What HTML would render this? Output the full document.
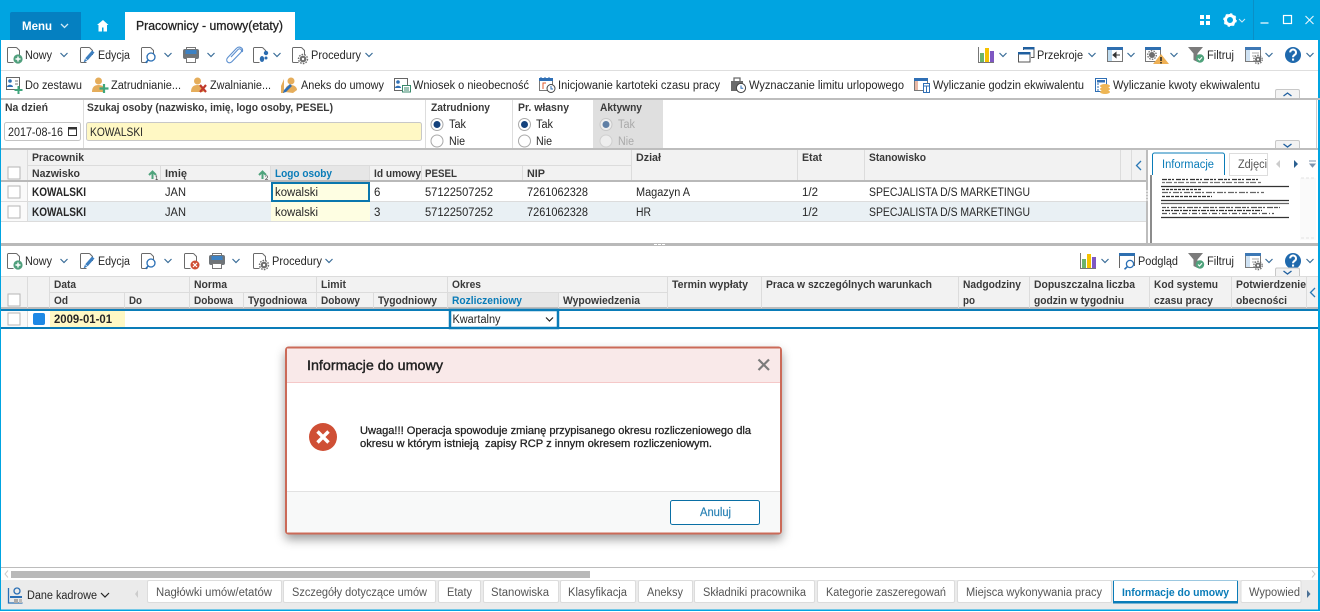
<!DOCTYPE html>
<html lang="pl"><head><meta charset="utf-8"><title>Pracownicy - umowy(etaty)</title>
<style>
html,body{margin:0;padding:0;background:#fff;width:1320px;height:612px;overflow:hidden}
svg{display:block}
text{font-family:"Liberation Sans",sans-serif;font-size:11.5px;fill:#262626}
.b{font-weight:bold}
.h{font-weight:bold;fill:#3a3a3a;font-size:11px}
.bl{fill:#0a7cb8}
.w{fill:#fff}
.g{fill:#aaa}
.t{fill:#555;font-size:11.5px}
.d{font-size:11.2px;fill:#222;stroke:#222;stroke-width:.28px}
</style></head><body>
<svg xmlns="http://www.w3.org/2000/svg" width="1320" height="612" viewBox="0 0 1320 612">
<defs>
<filter id="sh" x="-10%" y="-15%" width="120%" height="135%"><feDropShadow dx="0" dy="5" stdDeviation="5" flood-color="#000" flood-opacity=".38"/></filter>
<path id="ch" d="M-3.500-2 0 1.500 3.500-2" fill="none" stroke="#3a6d99" stroke-width="1.200"/>
<path id="doc" d="M9.500 .5H1.500a1 1 0 0 0-1 1v13a1 1 0 0 0 1 1h5M9.500 .5l3 3V8" fill="none" stroke="#6a6a6a" stroke-width="1"/>
<g id="nowy"><use href="#doc"/><circle cx="11" cy="12" r="4.600" fill="#4f9f7c"/><path d="M11 9.500v5M8.500 12h5" stroke="#fff" stroke-width="1.400"/></g>
<g id="edit"><use href="#doc"/><path d="M3.500 15.500l1.500-4 7-8 2.500 2-7 8z" fill="#3d7fc0"/><path d="M5 11.500l2.500 2" stroke="#fff" stroke-width=".7"/></g>
<g id="find"><use href="#doc"/><circle cx="10" cy="10" r="4" fill="#fff" stroke="#2a6fb5" stroke-width="1.300"/><path d="M7.200 13l-2.500 2.800" stroke="#2a6fb5" stroke-width="1.600"/></g>
<g id="print"><path d="M3.500 .5h9v3h-9z" fill="#fff" stroke="#777"/><rect x="0" y="2" width="16" height="10" rx="2" fill="#6f7478"/><rect x="2.500" y="3" width="11" height="4" fill="#3d82c4"/><path d="M3.500 10.500h9v5h-9z" fill="#fff" stroke="#777"/></g>
<g id="proc"><use href="#doc"/><circle cx="11" cy="12" r="3.300" fill="#6e6e6e"/><circle cx="11" cy="12" r="4.500" fill="none" stroke="#6e6e6e" stroke-width="1.400" stroke-dasharray="1.600 1.200"/><circle cx="11" cy="12" r="1.200" fill="#fff"/></g>
<g id="chart"><path d="M.5 0v15.500H16" fill="none" stroke="#777"/><rect x="2" y="6" width="4" height="9" fill="#6bb36b"/><rect x="7" y="1" width="4" height="14" fill="#f5c200"/><rect x="12" y="4" width="4" height="11" fill="#7e57c2"/></g>
<g id="funnel"><path d="M0 0h15l-5.500 6.500V15l-4-2V6.500z" fill="#7b7b7b"/><circle cx="12" cy="11.500" r="4.200" fill="#4fa37c"/><path d="M10 11.500l1.500 1.500 2.500-2.800" fill="none" stroke="#fff" stroke-width="1.100"/></g>
<g id="tgear"><rect x=".5" y=".5" width="15" height="14" fill="#fff" stroke="#7a7a7a"/><rect x="0" y="0" width="16" height="3" fill="#3d78b5"/><rect x="1" y="3" width="4" height="11" fill="#cfe2f3"/><path d="M7 6h7M7 9h3" stroke="#aaa"/><circle cx="13" cy="12.500" r="3" fill="#6e6e6e"/><circle cx="13" cy="12.500" r="4.200" fill="none" stroke="#6e6e6e" stroke-width="1.300" stroke-dasharray="1.500 1.200"/><circle cx="13" cy="12.500" r="1.100" fill="#fff"/></g>
<g id="help"><circle r="8" fill="#1f69ad"/><path d="M-2.800-2.600a2.900 2.900 0 1 1 4.500 2.400c-1.100.8-1.700 1.200-1.700 2.500" fill="none" stroke="#fff" stroke-width="2"/><rect x="-1" y="3.500" width="2.100" height="2.100" fill="#fff"/></g>
<g id="person"><circle cx="6.500" cy="4" r="3.500" fill="#e5ad5b"/><path d="M0 15c0-5 2.500-7 6.500-7s6 2 6 5v2z" fill="#e5ad5b"/></g>
<g id="radio"><circle r="6" fill="#fff" stroke="#a9a9a9"/></g>
<g id="radioOn"><circle r="6" fill="#fff" stroke="#a9a9a9"/><circle r="3.500" fill="#14427c"/></g>
<rect id="cb" width="12" height="12" fill="#fff" stroke="#b5b5b5"/>
<g id="sort"><path d="M3.500 9V2M0 5l3.500-3.500L7 5" fill="none" stroke="#4fa37c" stroke-width="2"/></g>
</defs>

<rect width="1320" height="612" fill="#fff"/>
<!-- top bar -->
<rect width="1320" height="40" fill="#00a4e1"/>
<rect x="0" y="40" width="1" height="570" fill="#00a4e1"/><rect x="1318" y="40" width="2" height="570" fill="#00a4e1"/>
<path d="M10 14a2 2 0 0 1 2-2h69v28H10z" fill="#0580c1"/>
<text class="b w" x="22" y="30" textLength="30" lengthAdjust="spacingAndGlyphs">Menu</text>
<path d="M61 24l3.500 3.500L68 24" fill="none" stroke="#cfeaf7" stroke-width="1.300"/>
<path d="M103 20l5.500 5h-1.500v6.500h-3.500v-4h-1.500v4H98.500V25H97z" fill="#fff"/>
<rect x="125" y="12" width="170" height="28" fill="#fff"/>
<text class="d" x="136" y="30" textLength="147" lengthAdjust="spacingAndGlyphs" style="font-size:12.500px">Pracownicy - umowy(etaty)</text>
<g fill="#fff"><rect x="1200" y="15" width="4" height="4"/><rect x="1206" y="15" width="4" height="4"/><rect x="1200" y="21" width="4" height="4"/><rect x="1206" y="21" width="4" height="4"/></g>
<circle cx="1230" cy="20" r="4.500" fill="none" stroke="#fff" stroke-width="3"/><circle cx="1230" cy="20" r="6" fill="none" stroke="#fff" stroke-width="1.600" stroke-dasharray="2.200 2.500"/>
<path d="M1239 19l3 3 3-3" fill="none" stroke="#cfeaf7"/>
<rect x="1253" y="0" width="1" height="40" fill="#0a8fc6"/>
<path d="M1260.500 23h8" stroke="#fff" stroke-width="1.200"/>
<rect x="1283.500" y="15.500" width="8" height="8" fill="none" stroke="#fff" stroke-width="1.200"/>
<path d="M1305.500 16l8 8M1313.500 16l-8 8" stroke="#eaf7fd" stroke-width="1.100"/>

<!-- toolbar 1 -->
<use href="#nowy" x="7" y="47"/><text x="25" y="59" textLength="27" lengthAdjust="spacingAndGlyphs">Nowy</text><use href="#ch" x="64" y="55"/>
<use href="#edit" x="80" y="47"/><text x="98" y="59" textLength="32" lengthAdjust="spacingAndGlyphs">Edycja</text>
<use href="#find" x="141" y="47"/><use href="#ch" x="168" y="55"/>
<use href="#print" x="183" y="47"/><use href="#ch" x="211" y="55"/>
<path d="M231 57l7-7.500c2-2 4.800.8 2.800 3l-9 9.300c-3 3-7-1-4-4.300l8.500-9c3-3 7.500-.5 6 3.500" fill="none" stroke="#5c8fcf" stroke-width="1.100"/>
<use href="#doc" x="253" y="47"/><g fill="#2b6cb0"><circle cx="266" cy="53" r="2.200"/><ellipse cx="262" cy="59" rx="2.200" ry="3"/><circle cx="266" cy="58" r="1.500"/></g><use href="#ch" x="277" y="55"/>
<use href="#proc" x="292" y="47"/><text x="311" y="59" textLength="50" lengthAdjust="spacingAndGlyphs">Procedury</text><use href="#ch" x="369" y="55"/>

<use href="#chart" x="978" y="47"/><use href="#ch" x="1003" y="55"/>
<path d="M1023.500 50V47.500h10.500v10h-3" fill="none" stroke="#555"/><rect x="1023" y="47" width="11.500" height="2.500" fill="#1f5f9f"/><rect x="1018.500" y="52.500" width="11.500" height="9.500" fill="#fff" stroke="#555"/><rect x="1018" y="52" width="12.500" height="2.500" fill="#1f5f9f"/>
<text x="1037" y="59" textLength="46" lengthAdjust="spacingAndGlyphs">Przekroje</text><use href="#ch" x="1092" y="55"/>
<rect x="1107.500" y="47.500" width="15" height="14" fill="#fff" stroke="#777"/><rect x="1107" y="47" width="16" height="3" fill="#2e6fb0"/><rect x="1108" y="50" width="4" height="11" fill="#bfdcf0"/><path d="M1114 55h6M1116 52.500l-3 2.500 3 2.500z" stroke="#333" fill="#333"/>
<use href="#ch" x="1131" y="55"/>
<rect x="1145.500" y="47.500" width="15" height="14" fill="#fff" stroke="#777"/><rect x="1145" y="47" width="16" height="3" fill="#2e6fb0"/><circle cx="1152" cy="55" r="3" fill="#6e6e6e"/><circle cx="1152" cy="55" r="4.300" fill="none" stroke="#6e6e6e" stroke-width="1.300" stroke-dasharray="1.500 1.200"/><path d="M1161 54l-8 10h16z" fill="#eeb055"/><path d="M1161 57v4M1161 62v1.500" stroke="#222" stroke-width="1.500"/>
<use href="#ch" x="1174" y="55"/>
<use href="#funnel" x="1188" y="47"/><text x="1207" y="59" textLength="27" lengthAdjust="spacingAndGlyphs">Filtruj</text>
<use href="#tgear" x="1245" y="47"/><use href="#ch" x="1269" y="55"/>
<use href="#help" x="1293" y="55"/><use href="#ch" x="1310" y="55"/>
<rect x="1" y="70" width="1317" height="1" fill="#dedede"/>

<!-- toolbar 2 -->
<g><rect x="6.500" y="77.500" width="13" height="12" fill="#fff" stroke="#666"/><circle cx="10" cy="81" r="1.800" fill="#2f6fb5"/><path d="M7 87c0-3 6-3 6 0z" fill="#2f6fb5"/><path d="M15 81h3M15 84h3" stroke="#777"/><path d="M18.500 86v8M14.500 90h8" stroke="#3fa67c" stroke-width="2"/></g>
<text x="25" y="89" textLength="57" lengthAdjust="spacingAndGlyphs">Do zestawu</text>
<use href="#person" x="92" y="77"/><path d="M104 84v9M99.500 88.500h9" stroke="#3fa67c" stroke-width="2.200"/>
<text x="111" y="89" textLength="70" lengthAdjust="spacingAndGlyphs">Zatrudnianie...</text>
<use href="#person" x="191" y="77"/><path d="M200 85l6 7M206 85l-6 7" stroke="#c0392b" stroke-width="2.200"/>
<text x="210" y="89" textLength="61" lengthAdjust="spacingAndGlyphs">Zwalnianie...</text>
<path d="M281 86l3-7v14h-3z" fill="#e5ad5b"/><circle cx="291" cy="81" r="3.500" fill="#e5ad5b"/><path d="M285 92c0-6 3-7 6-7s6 2 6 5l-4 3z" fill="#e5ad5b"/><path d="M283 93l1-3 6-6 2 2-6 6z" fill="#2f6fb5"/>
<text x="301" y="89" textLength="83" lengthAdjust="spacingAndGlyphs">Aneks do umowy</text>
<rect x="394.500" y="78.500" width="13" height="12" fill="#fff" stroke="#666"/><circle cx="398" cy="82" r="1.800" fill="#2f6fb5"/><path d="M395 88c0-3 6-3 6 0z" fill="#2f6fb5"/><rect x="402.500" y="85.500" width="8" height="6.500" fill="#fff" stroke="#3b8a6c"/><path d="M404 88h5M404 90h5" stroke="#3b8a6c"/>
<text x="413" y="89" textLength="116" lengthAdjust="spacingAndGlyphs">Wniosek o nieobecność</text>
<rect x="539.500" y="79.500" width="13" height="11" fill="#fff" stroke="#777"/><rect x="539" y="78" width="14" height="3" fill="#2f6fb5"/><path d="M541 77v3M545 77v3M549 77v3" stroke="#2f6fb5"/><path d="M546 83h-3v6" fill="none" stroke="#e05a2b"/><circle cx="551" cy="88.500" r="4" fill="#fff" stroke="#444"/><path d="M551 86v3h2" fill="none" stroke="#2f6fb5"/>
<text x="558" y="89" textLength="162" lengthAdjust="spacingAndGlyphs">Inicjowanie kartoteki czasu pracy</text>
<path d="M731 81h12v10h-12z" fill="#6a6a6a"/><path d="M734 81v-3h6v3" fill="none" stroke="#6a6a6a" stroke-width="1.300"/><circle cx="741" cy="88" r="4.600" fill="#fff" stroke="#444"/><path d="M741 85.500v2.800h2.200" fill="none" stroke="#2f6fb5"/>
<text x="749" y="89" textLength="155" lengthAdjust="spacingAndGlyphs">Wyznaczanie limitu urlopowego</text>
<rect x="914.500" y="78.500" width="13" height="12" fill="#fff" stroke="#777"/><rect x="914" y="78" width="14" height="3" fill="#2f6fb5"/><rect x="915" y="81" width="3" height="9" fill="#e9b8a6"/><rect x="923.500" y="83.500" width="6" height="9" fill="#fff" stroke="#2f6fb5"/><path d="M924 86h5M926.500 86v6" stroke="#2f6fb5"/>
<text x="933" y="89" textLength="151" lengthAdjust="spacingAndGlyphs">Wyliczanie godzin ekwiwalentu</text>
<rect x="1095.500" y="78.500" width="11" height="13" fill="#fff" stroke="#2f6fb5"/><rect x="1097" y="80" width="8" height="2.500" fill="#2f6fb5"/><path d="M1097 84h2M1097 87h2M1097 90h2" stroke="#2f6fb5"/><ellipse cx="1105" cy="86" rx="5" ry="2" fill="#eeb655"/><ellipse cx="1105" cy="89" rx="5" ry="2" fill="#eeb655"/><ellipse cx="1105" cy="92" rx="5" ry="2" fill="#eeb655"/>
<text x="1113" y="89" textLength="147" lengthAdjust="spacingAndGlyphs">Wyliczanie kwoty ekwiwalentu</text>
<path d="M1275.500 98v-7a1.500 1.500 0 0 1 1.500-1.500h21a1.500 1.500 0 0 1 1.500 1.500v7" fill="#f3f3f3" stroke="#c8c8c8"/>
<path d="M1283.500 96l4-3 4 3" fill="none" stroke="#1f5f9f" stroke-width="1.300"/>

<!-- filter panel -->
<rect x="0" y="98" width="1320" height="2" fill="#bdbdbd"/><rect x="0" y="98" width="1" height="52" fill="#00a4e1"/>
<rect x="1" y="148" width="1317" height="2" fill="#bdbdbd"/>
<rect x="1316" y="100" width="1" height="48" fill="#ccc"/>
<rect x="83" y="100" width="1" height="48" fill="#ddd"/><rect x="425" y="100" width="1" height="48" fill="#ddd"/><rect x="512" y="100" width="1" height="48" fill="#ddd"/>
<rect x="593" y="100" width="70" height="48" fill="#dfdfdf"/>
<text class="h" x="5" y="111" textLength="43" lengthAdjust="spacingAndGlyphs">Na dzień</text>
<text class="h" x="87" y="111" textLength="246" lengthAdjust="spacingAndGlyphs">Szukaj osoby (nazwisko, imię, logo osoby, PESEL)</text>
<text class="h" x="431" y="111" textLength="59" lengthAdjust="spacingAndGlyphs">Zatrudniony</text>
<text class="h" x="518" y="111" textLength="51" lengthAdjust="spacingAndGlyphs">Pr. własny</text>
<text class="h" x="600" y="111" textLength="42" lengthAdjust="spacingAndGlyphs">Aktywny</text>
<rect x="4.500" y="122.500" width="76" height="18" rx="2" fill="#fff" stroke="#c4c4c4"/>
<text x="8" y="136" textLength="55" lengthAdjust="spacingAndGlyphs">2017-08-16</text>
<rect x="68.500" y="128.500" width="8" height="7" fill="none" stroke="#333"/><rect x="68" y="127" width="9" height="2.500" fill="#333"/>
<rect x="86.500" y="122.500" width="335" height="18" rx="2" fill="#fff8c4" stroke="#c8c8c8"/>
<text x="90" y="136" textLength="53" lengthAdjust="spacingAndGlyphs">KOWALSKI</text>
<use href="#radioOn" x="437" y="124.500"/><use href="#radio" x="437" y="141"/>
<text x="449" y="128" textLength="17" lengthAdjust="spacingAndGlyphs">Tak</text><text x="449" y="145" textLength="16" lengthAdjust="spacingAndGlyphs">Nie</text>
<use href="#radioOn" x="524.500" y="124.500"/><use href="#radio" x="524.500" y="141"/>
<text x="536" y="128" textLength="17" lengthAdjust="spacingAndGlyphs">Tak</text><text x="536" y="145" textLength="16" lengthAdjust="spacingAndGlyphs">Nie</text>
<circle cx="606" cy="124.500" r="6" fill="#eee" stroke="#c8c8c8"/><circle cx="606" cy="124.500" r="3.500" fill="#5f7fa5"/><circle cx="606" cy="141" r="6" fill="#eee" stroke="#d0d0d0"/>
<text class="g" x="618" y="128" textLength="17" lengthAdjust="spacingAndGlyphs">Tak</text><text class="g" x="618" y="145" textLength="16" lengthAdjust="spacingAndGlyphs">Nie</text>
<path d="M1275.500 148v-6a1.500 1.500 0 0 1 1.500-1.500h21a1.500 1.500 0 0 1 1.500 1.500v6" fill="#f3f3f3" stroke="#c8c8c8"/>
<path d="M1283.500 144l4 3 4-3" fill="none" stroke="#1f5f9f" stroke-width="1.300"/>

<!-- grid 1 -->
<rect x="1" y="150" width="1145" height="30" fill="#f2f2f2"/>
<rect x="271" y="165" width="98" height="15" fill="#e6e6e6"/>
<rect x="1" y="180" width="1145" height="2" fill="#b9b9b9"/>
<g fill="#dcdcdc">
<rect x="27" y="150" width="1" height="30"/><rect x="28" y="165" width="603" height="1"/>
<rect x="160" y="165" width="1" height="15"/><rect x="270" y="165" width="1" height="15"/><rect x="369" y="165" width="1" height="15"/><rect x="421" y="165" width="1" height="15"/><rect x="522" y="165" width="1" height="15"/>
<rect x="631" y="150" width="1" height="30"/><rect x="797" y="150" width="1" height="30"/><rect x="864" y="150" width="1" height="30"/><rect x="1120" y="150" width="1" height="30"/><rect x="1131" y="150" width="1" height="30"/>
<rect x="1" y="201" width="1145" height="1"/><rect x="1" y="221" width="1145" height="1"/><rect x="27" y="182" width="1" height="40"/>
</g>
<text class="h" x="32" y="161" textLength="52" lengthAdjust="spacingAndGlyphs">Pracownik</text>
<text class="h" x="32" y="177" textLength="48" lengthAdjust="spacingAndGlyphs">Nazwisko</text>
<use href="#sort" x="149" y="170"/><text x="155" y="180" style="font-size:6px">1</text>
<text class="h" x="165" y="177" textLength="22" lengthAdjust="spacingAndGlyphs">Imię</text>
<use href="#sort" x="259" y="170"/><text x="265" y="180" style="font-size:6px">2</text>
<text class="h bl" x="275" y="177" textLength="57" lengthAdjust="spacingAndGlyphs">Logo osoby</text>
<text class="h" x="374" y="177" textLength="47" lengthAdjust="spacingAndGlyphs">Id umowy</text>
<text class="h" x="425" y="177" textLength="32" lengthAdjust="spacingAndGlyphs">PESEL</text>
<text class="h" x="527" y="177" textLength="18" lengthAdjust="spacingAndGlyphs">NIP</text>
<text class="h" x="636" y="161" textLength="25" lengthAdjust="spacingAndGlyphs">Dział</text>
<text class="h" x="802" y="161" textLength="20" lengthAdjust="spacingAndGlyphs">Etat</text>
<text class="h" x="869" y="161" textLength="57" lengthAdjust="spacingAndGlyphs">Stanowisko</text>
<path d="M1141 161l-4.500 4.500 4.500 4.500" fill="none" stroke="#2a78b5" stroke-width="1.300"/>
<use href="#cb" x="8" y="167"/>
<rect x="28" y="202" width="1118" height="19" fill="#e9f0f4"/><rect x="1" y="202" width="26" height="19" fill="#fafafa"/><rect x="1" y="182" width="26" height="19" fill="#fafafa"/>
<rect x="271" y="182" width="99" height="19" fill="#fefee2"/><rect x="271" y="202" width="99" height="19" fill="#fefee2"/>
<rect x="272" y="183" width="97" height="18" fill="none" stroke="#0a77ad" stroke-width="2"/>
<use href="#cb" x="8" y="186"/><use href="#cb" x="8" y="206"/>
<text class="b" x="32" y="196" textLength="54" lengthAdjust="spacingAndGlyphs">KOWALSKI</text><text x="165" y="196" textLength="21" lengthAdjust="spacingAndGlyphs">JAN</text><text x="275" y="196" textLength="43" lengthAdjust="spacingAndGlyphs">kowalski</text><text x="374" y="196">6</text><text x="425" y="196" textLength="68" lengthAdjust="spacingAndGlyphs">57122507252</text><text x="527" y="196" textLength="61" lengthAdjust="spacingAndGlyphs">7261062328</text><text x="636" y="196" textLength="54" lengthAdjust="spacingAndGlyphs">Magazyn A</text><text x="802" y="196" textLength="16" lengthAdjust="spacingAndGlyphs">1/2</text><text x="869" y="196" textLength="161" lengthAdjust="spacingAndGlyphs">SPECJALISTA D/S MARKETINGU</text>
<text class="b" x="32" y="216" textLength="54" lengthAdjust="spacingAndGlyphs">KOWALSKI</text><text x="165" y="216" textLength="21" lengthAdjust="spacingAndGlyphs">JAN</text><text x="275" y="216" textLength="43" lengthAdjust="spacingAndGlyphs">kowalski</text><text x="374" y="216">3</text><text x="425" y="216" textLength="68" lengthAdjust="spacingAndGlyphs">57122507252</text><text x="527" y="216" textLength="61" lengthAdjust="spacingAndGlyphs">7261062328</text><text x="636" y="216" textLength="15" lengthAdjust="spacingAndGlyphs">HR</text><text x="802" y="216" textLength="16" lengthAdjust="spacingAndGlyphs">1/2</text><text x="869" y="216" textLength="161" lengthAdjust="spacingAndGlyphs">SPECJALISTA D/S MARKETINGU</text>

<!-- side panel -->
<rect x="1146" y="150" width="2" height="93" fill="#bdbdbd"/><path d="M1147 190v12" stroke="#fff" stroke-dasharray="2 1"/>
<rect x="1150" y="175" width="2" height="68" fill="#8c8c8c"/>
<rect x="1229.500" y="153.500" width="38" height="22" fill="#fff" stroke="#ddd"/>
<path d="M1152.500 175v-20a2 2 0 0 1 2-2h68a2 2 0 0 1 2 2v20" fill="#fff" stroke="#0a7cb8"/>
<text class="bl" x="1162" y="168" textLength="52" lengthAdjust="spacingAndGlyphs">Informacje</text>
<text class="t" x="1238" y="168" textLength="29" lengthAdjust="spacingAndGlyphs">Zdjęci</text>
<path d="M1280 160l-4 4 4 4z" fill="#ccc"/><path d="M1294 160l4 4-4 4z" fill="#2a5f90"/><path d="M1309 161h7M1310 164h5l-2.500 3z" stroke="#7b93ad" fill="#7b93ad"/>
<g stroke="#333" stroke-width="1.200" fill="none">
<path d="M1162 179.500h96" stroke-dasharray="5 1 3 1 2 2"/><path d="M1162 182.500h100" stroke-dasharray="3 1 6 2" stroke="#777"/>
<path d="M1161 186.500h128"/><path d="M1162 189.500h40" stroke-dasharray="3 1"/><path d="M1162 192.500h102" stroke-dasharray="6 1 2 2" stroke="#666"/>
<path d="M1162 196.500h50" stroke-dasharray="3 1 4 1"/><path d="M1161 200.500h128"/><path d="M1161 203.500h128" stroke="#666"/>
<path d="M1162 207.500h118" stroke-dasharray="4 1 2 2 6 1" stroke="#555"/><path d="M1162 210.500h100" stroke-dasharray="2 1 5 1"/><path d="M1162 213.500h112" stroke-dasharray="5 2 1 2" stroke="#555"/>
<path d="M1161 217.500h128"/>
</g>
<rect x="1300" y="178" width="16" height="62" fill="#fafafa"/>
<path d="M1301 178h14M1301 238h14" stroke="#e3e3e3" stroke-dasharray="3 2"/>

<!-- splitter -->
<rect x="1" y="243" width="1317" height="3" fill="#b9b9b9"/>
<path d="M654 244.500h12" stroke="#fff" stroke-dasharray="3 1"/>

<!-- toolbar 3 -->
<use href="#nowy" x="7" y="253"/><text x="25" y="265" textLength="27" lengthAdjust="spacingAndGlyphs">Nowy</text><use href="#ch" x="64" y="261"/>
<use href="#edit" x="80" y="253"/><text x="98" y="265" textLength="32" lengthAdjust="spacingAndGlyphs">Edycja</text>
<use href="#find" x="141" y="253"/><use href="#ch" x="168" y="261"/>
<use href="#doc" x="184" y="253"/><circle cx="195" cy="265" r="4.500" fill="#cf4f35"/><path d="M193 263l4 4M197 263l-4 4" stroke="#fff" stroke-width="1.200"/>
<use href="#print" x="209" y="253"/><use href="#ch" x="236" y="261"/>
<use href="#proc" x="253" y="253"/><text x="272" y="265" textLength="50" lengthAdjust="spacingAndGlyphs">Procedury</text><use href="#ch" x="329" y="261"/>
<use href="#chart" x="1080" y="253"/><use href="#ch" x="1105" y="261"/>
<path d="M1119.500 268V253.500h15V266" fill="#fff" stroke="#666"/><rect x="1119" y="253" width="16" height="3" fill="#2e6fb0"/><circle cx="1130" cy="264" r="3.600" fill="#fff" stroke="#2a6fb5" stroke-width="1.300"/><path d="M1127.500 266.500l-3 2.800" stroke="#2a6fb5" stroke-width="1.600"/>
<text x="1138" y="265" textLength="40" lengthAdjust="spacingAndGlyphs">Podgląd</text>
<use href="#funnel" x="1188" y="253"/><text x="1207" y="265" textLength="27" lengthAdjust="spacingAndGlyphs">Filtruj</text>
<use href="#tgear" x="1245" y="253"/><use href="#ch" x="1269" y="261"/>
<use href="#help" x="1293" y="261"/><use href="#ch" x="1310" y="261"/>

<!-- grid 2 -->
<rect x="1" y="276" width="1317" height="32" fill="#f2f2f2"/>
<rect x="1" y="276" width="1317" height="1" fill="#dcdcdc"/>
<rect x="447" y="293" width="111" height="15" fill="#e6e6e6"/>
<rect x="1" y="307" width="1317" height="2" fill="#bcbcbc"/>
<g fill="#dcdcdc">
<rect x="27" y="276" width="1" height="32"/><rect x="49" y="276" width="1" height="32"/><rect x="50" y="292" width="617" height="1"/>
<rect x="124" y="292" width="1" height="16"/><rect x="189" y="276" width="1" height="32"/><rect x="243" y="292" width="1" height="16"/><rect x="316" y="276" width="1" height="32"/><rect x="373" y="292" width="1" height="16"/><rect x="447" y="276" width="1" height="32"/><rect x="558" y="292" width="1" height="16"/>
<rect x="667" y="276" width="1" height="32"/><rect x="761" y="276" width="1" height="32"/><rect x="958" y="276" width="1" height="32"/><rect x="1029" y="276" width="1" height="32"/><rect x="1149" y="276" width="1" height="32"/><rect x="1231" y="276" width="1" height="32"/><rect x="1306" y="276" width="1" height="32"/>
<rect x="27" y="310" width="1" height="18"/>
</g>
<text class="h" x="54" y="288" textLength="22" lengthAdjust="spacingAndGlyphs">Data</text>
<text class="h" x="194" y="288" textLength="33" lengthAdjust="spacingAndGlyphs">Norma</text>
<text class="h" x="321" y="288" textLength="25" lengthAdjust="spacingAndGlyphs">Limit</text>
<text class="h" x="452" y="288" textLength="29" lengthAdjust="spacingAndGlyphs">Okres</text>
<text class="h" x="672" y="288" textLength="76" lengthAdjust="spacingAndGlyphs">Termin wypłaty</text>
<text class="h" x="766" y="288" textLength="166" lengthAdjust="spacingAndGlyphs">Praca w szczególnych warunkach</text>
<text class="h" x="963" y="288" textLength="58" lengthAdjust="spacingAndGlyphs">Nadgodziny</text>
<text class="h" x="1034" y="288" textLength="101" lengthAdjust="spacingAndGlyphs">Dopuszczalna liczba</text>
<text class="h" x="1154" y="288" textLength="64" lengthAdjust="spacingAndGlyphs">Kod systemu</text>
<text class="h" x="1236" y="288" textLength="70" lengthAdjust="spacingAndGlyphs">Potwierdzenie</text>
<text class="h" x="54" y="304" textLength="14" lengthAdjust="spacingAndGlyphs">Od</text>
<text class="h" x="129" y="304" textLength="13" lengthAdjust="spacingAndGlyphs">Do</text>
<text class="h" x="194" y="304" textLength="39" lengthAdjust="spacingAndGlyphs">Dobowa</text>
<text class="h" x="248" y="304" textLength="59" lengthAdjust="spacingAndGlyphs">Tygodniowa</text>
<text class="h" x="321" y="304" textLength="39" lengthAdjust="spacingAndGlyphs">Dobowy</text>
<text class="h" x="378" y="304" textLength="59" lengthAdjust="spacingAndGlyphs">Tygodniowy</text>
<text class="h bl" x="452" y="304" textLength="70" lengthAdjust="spacingAndGlyphs">Rozliczeniowy</text>
<text class="h" x="563" y="304" textLength="77" lengthAdjust="spacingAndGlyphs">Wypowiedzenia</text>
<text class="h" x="963" y="304" textLength="12" lengthAdjust="spacingAndGlyphs">po</text>
<text class="h" x="1034" y="304" textLength="90" lengthAdjust="spacingAndGlyphs">godzin w tygodniu</text>
<text class="h" x="1154" y="304" textLength="59" lengthAdjust="spacingAndGlyphs">czasu pracy</text>
<text class="h" x="1236" y="304" textLength="51" lengthAdjust="spacingAndGlyphs">obecności</text>
<path d="M1315 288l-4.500 4.500 4.500 4.500" fill="none" stroke="#2a78b5" stroke-width="1.300"/>
<use href="#cb" x="8" y="294"/>
<path d="M1275.500 276v-6.500a1.500 1.500 0 0 1 1.500-1.500h21a1.500 1.500 0 0 1 1.500 1.500v6.500" fill="#f3f3f3" stroke="#c8c8c8"/>
<path d="M1283.500 271l4 3 4-3" fill="none" stroke="#1f5f9f" stroke-width="1.300"/>
<rect x="1" y="309" width="1317" height="2" fill="#0a7cb8"/><rect x="1" y="327" width="1317" height="2" fill="#0a7cb8"/>
<rect x="1" y="311" width="26" height="16" fill="#fafafa"/>
<use href="#cb" x="8" y="313"/>
<rect x="33" y="313" width="12" height="12" rx="2" fill="#1e88e5"/>
<rect x="50" y="311" width="75" height="16" fill="#fff8c4"/>
<text class="b" x="54" y="323" textLength="58" lengthAdjust="spacingAndGlyphs">2009-01-01</text>
<rect x="450" y="310" width="108" height="18" fill="#fff" stroke="#0a7cb8" stroke-width="2.500"/>
<text x="452.500" y="323" textLength="48" lengthAdjust="spacingAndGlyphs">Kwartalny</text>
<path d="M546 317.500l3.500 3.500 3.500-3.500" fill="none" stroke="#222" stroke-width="1.200"/>

<!-- dialog -->
<g filter="url(#sh)"><rect x="286" y="347.500" width="495" height="186" rx="2.500" fill="#fff" stroke="#cb6a58" stroke-width="2"/></g>
<rect x="287" y="348.500" width="493" height="33.500" fill="#f9e9e9"/><rect x="287" y="382" width="493" height="1" fill="#f5c8c8"/>
<rect x="287" y="491" width="493" height="1" fill="#e2e2e2"/><rect x="287" y="492" width="493" height="40.500" fill="#f8f9f9"/>
<text class="d" x="307" y="370" textLength="136" lengthAdjust="spacingAndGlyphs" style="font-size:14px;stroke-width:.4px">Informacje do umowy</text>
<path d="M758.500 359.500l10.500 10.500M769 359.500l-10.500 10.500" stroke="#7b7b7b" stroke-width="2.200"/>
<circle cx="323" cy="437" r="14" fill="#cf4f35"/><path d="M317.500 431.500l11 11M328.500 431.500l-11 11" stroke="#fff" stroke-width="3.400"/>
<text class="d" x="360" y="434" textLength="391" lengthAdjust="spacingAndGlyphs">Uwaga!!! Operacja spowoduje zmianę przypisanego okresu rozliczeniowego dla</text>
<text class="d" x="360" y="447" textLength="352" lengthAdjust="spacingAndGlyphs" xml:space="preserve">okresu w którym istnieją  zapisy RCP z innym okresem rozliczeniowym.</text>
<rect x="670.500" y="500.500" width="89" height="24" rx="2" fill="#fff" stroke="#0a6fa5"/>
<text x="700" y="516" textLength="31" lengthAdjust="spacingAndGlyphs" style="font-size:11.500px;fill:#2a82b5;stroke:#2a82b5;stroke-width:.2px">Anuluj</text>

<!-- bottom -->
<rect x="1" y="567" width="1317" height="1" fill="#bcbcbc"/>
<rect x="11" y="571" width="579" height="7" fill="#b9b9b9"/>
<path d="M8 570.500l-3 3.500 3 3.500M1312 570.500l3 3.500-3 3.500" fill="none" stroke="#ccc"/>
<rect x="1" y="580" width="1317" height="30" fill="#ebebeb"/>
<rect x="0" y="609.500" width="1320" height="1.500" fill="#00a4e1"/>
<circle cx="17" cy="591" r="3" fill="none" stroke="#2a6fb5" stroke-width="1.300"/><path d="M8.500 588v15h14" fill="none" stroke="#2a6fb5" stroke-width="1.300"/><rect x="10" y="596" width="12" height="2" fill="#2a6fb5"/><rect x="14" y="599" width="4" height="4" fill="#aaa"/><rect x="19" y="599" width="3" height="4" fill="#bbb"/>
<text x="27" y="599" textLength="70" lengthAdjust="spacingAndGlyphs">Dane kadrowe</text>
<path d="M101 593l4 4 4-4" fill="none" stroke="#222" stroke-width="1.200"/>
<path d="M138 590l-3 4 3 4z" fill="#ccc"/>
<g fill="#fff" stroke="#dcdcdc">
<rect x="147.500" y="580.500" width="134" height="22" rx="1.500"/><rect x="283.500" y="580.500" width="152" height="22" rx="1.500"/><rect x="438.500" y="580.500" width="42" height="22" rx="1.500"/><rect x="483.500" y="580.500" width="75" height="22" rx="1.500"/><rect x="560.500" y="580.500" width="75" height="22" rx="1.500"/><rect x="638.500" y="580.500" width="54" height="22" rx="1.500"/><rect x="694.500" y="580.500" width="120" height="22" rx="1.500"/><rect x="817.500" y="580.500" width="137" height="22" rx="1.500"/><rect x="957.500" y="580.500" width="154" height="22" rx="1.500"/><rect x="1241" y="580.500" width="60" height="22" rx="1.500"/>
</g>
<rect x="1113.500" y="580.500" width="124" height="22" fill="#fff" stroke="#9cc8e0"/><path d="M1113.500 581v21.500h124V581" fill="none" stroke="#0a7cb8"/><rect x="1113" y="601" width="125" height="2.500" fill="#0a7cb8"/>
<text class="t" x="156" y="596" textLength="116" lengthAdjust="spacingAndGlyphs">Nagłówki umów/etatów</text>
<text class="t" x="292" y="596" textLength="135" lengthAdjust="spacingAndGlyphs">Szczegóły dotyczące umów</text>
<text class="t" x="447" y="596" textLength="25" lengthAdjust="spacingAndGlyphs">Etaty</text>
<text class="t" x="491" y="596" textLength="58" lengthAdjust="spacingAndGlyphs">Stanowiska</text>
<text class="t" x="568" y="596" textLength="59" lengthAdjust="spacingAndGlyphs">Klasyfikacja</text>
<text class="t" x="647" y="596" textLength="36" lengthAdjust="spacingAndGlyphs">Aneksy</text>
<text class="t" x="703" y="596" textLength="103" lengthAdjust="spacingAndGlyphs">Składniki pracownika</text>
<text class="t" x="826" y="596" textLength="120" lengthAdjust="spacingAndGlyphs">Kategorie zaszeregowań</text>
<text class="t" x="966" y="596" textLength="136" lengthAdjust="spacingAndGlyphs">Miejsca wykonywania pracy</text>
<text class="h bl" x="1122" y="596" textLength="107" lengthAdjust="spacingAndGlyphs">Informacje do umowy</text>
<text class="t" x="1249" y="596" textLength="51" lengthAdjust="spacingAndGlyphs">Wypowied</text>
<path d="M1307 590l3.500 4-3.500 4z" fill="#4b7196"/>
</svg>
</body></html>
